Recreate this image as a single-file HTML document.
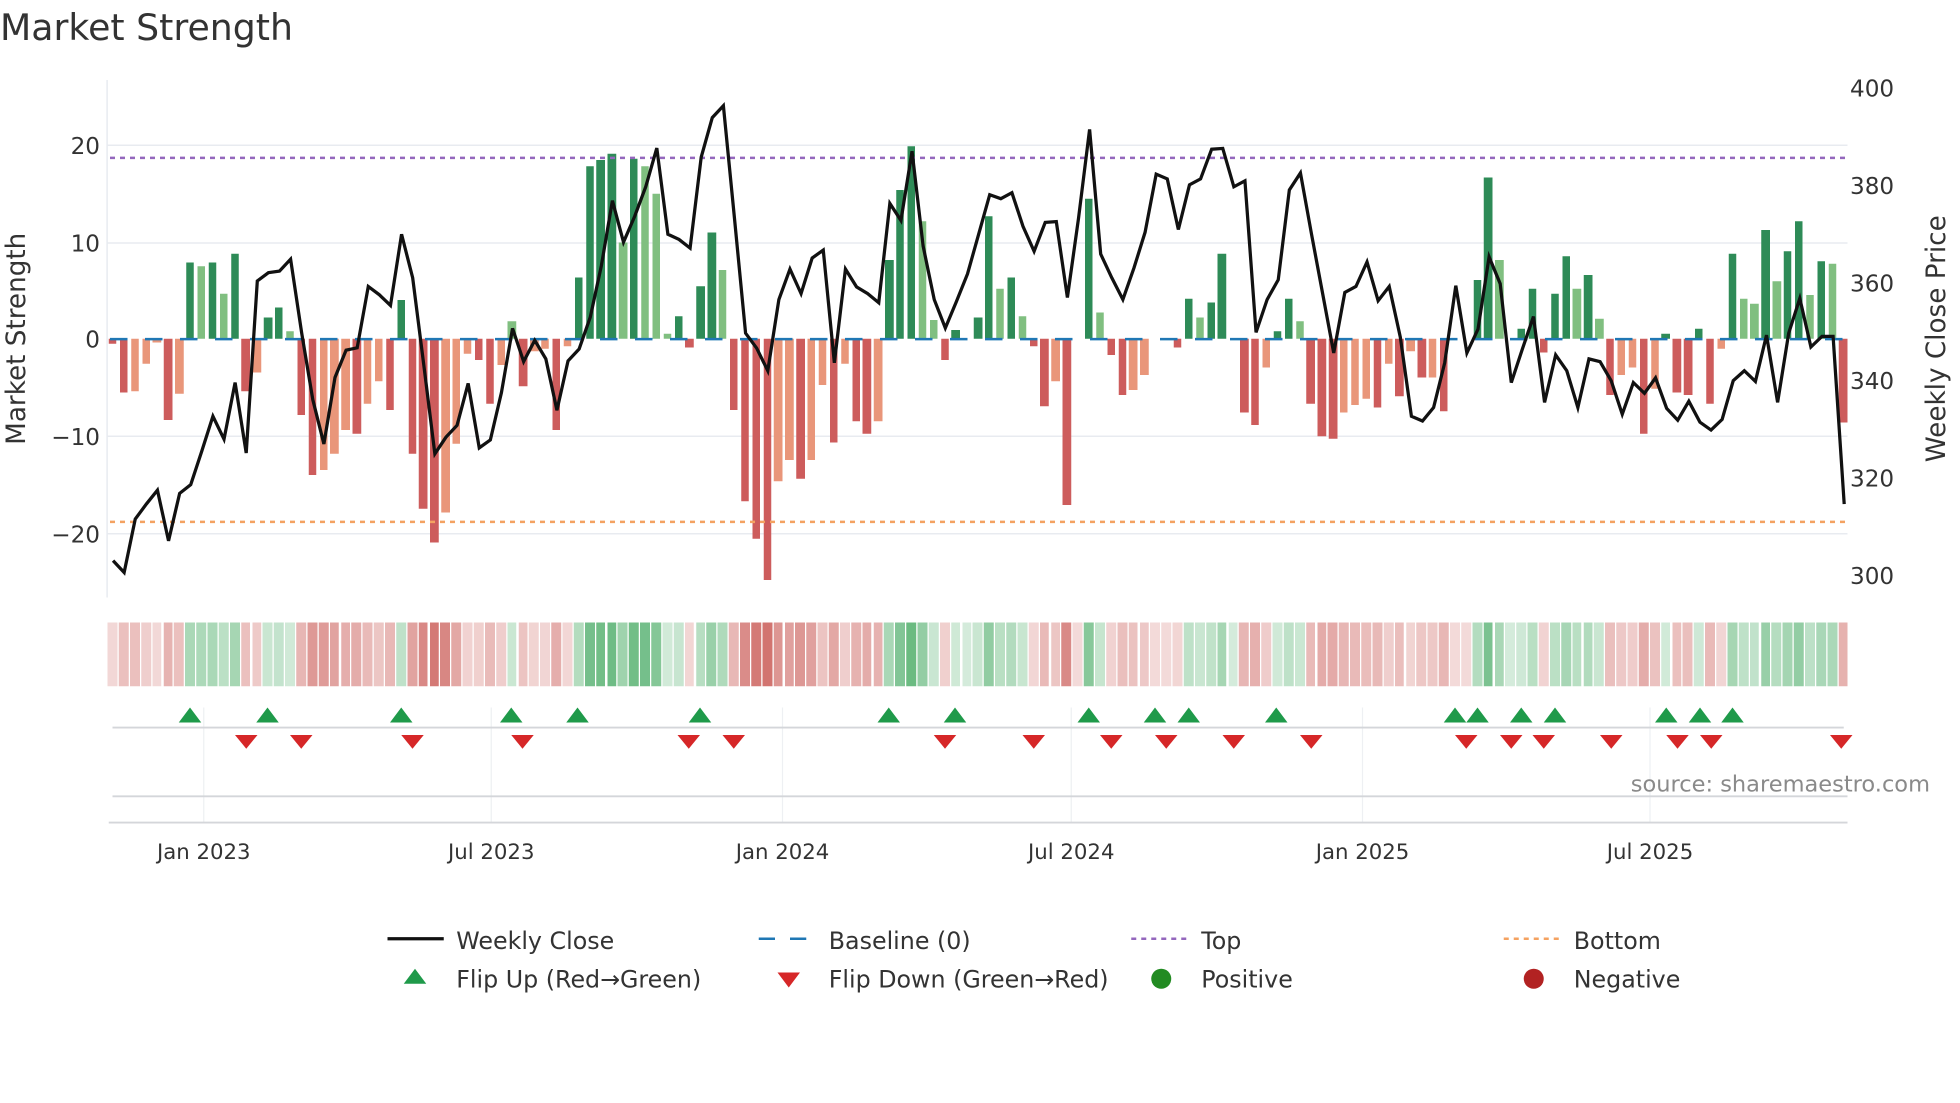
<!DOCTYPE html>
<html><head><meta charset="utf-8">
<style>
html,body{margin:0;padding:0;background:#fff;width:1960px;height:1102px;overflow:hidden;}
#root{position:absolute;left:0;top:0;width:1568px;height:882px;transform:scale(1.25);transform-origin:0 0;}
svg{display:block;font-family:"DejaVu Sans","Liberation Sans",sans-serif;position:absolute;left:0;top:0;}
#cols{position:absolute;left:85.66px;top:64px;display:flex;width:1394px;height:485px;}
#cols i{position:relative;display:block;width:8.878px;height:485px;flex:none;}
#cols i::before{content:"";position:absolute;left:1.24px;width:6.4px;height:calc(var(--m)*7.77px);}
#cols i::after{content:"";position:absolute;left:.54px;width:7.8px;top:434px;height:51px;opacity:calc(.22 + .6*min(var(--m)/22,1));}
#cols .a::before,#cols .b::before{bottom:277.7px;}
#cols .c::before,#cols .d::before{top:207.3px;}
#cols .a::before{background:#2e8b57}
#cols .b::before{background:#80bf80}
#cols .c::before{background:#cd5c5c}
#cols .d::before{background:#e9967a}
#cols .a::after,#cols .b::after{background:rgb(60,165,90)}
#cols .c::after,#cols .d::after{background:rgb(200,85,80)}
</style></head>
<body>
<div id="root">
<svg width="1568" height="882" viewBox="0 0 1568 882">
<g stroke="#e8ebf0" stroke-width="1.2">
<line x1="86" y1="116.2" x2="1478" y2="116.2"/>
<line x1="86" y1="194.4" x2="1478" y2="194.4"/>
<line x1="86" y1="349" x2="1478" y2="349"/>
<line x1="86" y1="427" x2="1478" y2="427"/>
<line x1="85.7" y1="64" x2="85.7" y2="478"/>
</g>
<g stroke="#eef0f3" stroke-width="1">
<line x1="163" y1="566" x2="163" y2="658"/><line x1="393" y1="566" x2="393" y2="658"/>
<line x1="626" y1="566" x2="626" y2="658"/><line x1="857" y1="566" x2="857" y2="658"/>
<line x1="1090" y1="566" x2="1090" y2="658"/><line x1="1320" y1="566" x2="1320" y2="658"/>
</g>
</svg>
<div id="cols">
<i class=c style=--m:.5></i><i class=c style=--m:5.5></i><i class=d style=--m:5.4></i><i class=d style=--m:2.5></i><i class=d style=--m:.4></i><i class=c style=--m:8.3></i><i class=d style=--m:5.6></i><i class=a style=--m:7.9></i><i class=b style=--m:7.5></i><i class=a style=--m:7.9></i>
<i class=b style=--m:4.7></i><i class=a style=--m:8.8></i><i class=c style=--m:5.4></i><i class=d style=--m:3.5></i><i class=a style=--m:2.2></i><i class=a style=--m:3.2></i><i class=b style=--m:.8></i><i class=c style=--m:7.8></i><i class=c style=--m:14></i><i class=d style=--m:13.5></i>
<i class=d style=--m:11.8></i><i class=d style=--m:9.3></i><i class=c style=--m:9.7></i><i class=d style=--m:6.7></i><i class=d style=--m:4.3></i><i class=c style=--m:7.3></i><i class=a style=--m:4></i><i class=c style=--m:11.8></i><i class=c style=--m:17.5></i><i class=c style=--m:20.9></i>
<i class=d style=--m:17.8></i><i class=d style=--m:10.8></i><i class=d style=--m:1.5></i><i class=c style=--m:2.2></i><i class=c style=--m:6.6></i><i class=d style=--m:2.7></i><i class=b style=--m:1.8></i><i class=c style=--m:4.8></i><i class=d style=--m:1.3></i><i class=d style=--m:1></i>
<i class=c style=--m:9.3></i><i class=d style=--m:.7></i><i class=a style=--m:6.3></i><i class=a style=--m:17.8></i><i class=a style=--m:18.5></i><i class=a style=--m:19.1></i><i class=b style=--m:10></i><i class=a style=--m:18.6></i><i class=b style=--m:17.8></i><i class=b style=--m:15></i>
<i class=b style=--m:.6></i><i class=a style=--m:2.4></i><i class=c style=--m:.8></i><i class=a style=--m:5.4></i><i class=a style=--m:11></i>
<i class=b style=--m:7.1></i><i class=c style=--m:7.3></i><i class=c style=--m:16.7></i><i class=c style=--m:20.5></i><i class=c style=--m:24.8></i><i class=d style=--m:14.6></i><i class=d style=--m:12.4></i><i class=c style=--m:14.4></i><i class=d style=--m:12.4></i><i class=d style=--m:4.7></i>
<i class=c style=--m:10.7></i><i class=d style=--m:2.5></i><i class=c style=--m:8.4></i><i class=c style=--m:9.7></i><i class=d style=--m:8.4></i><i class=a style=--m:8.2></i><i class=a style=--m:15.4></i><i class=a style=--m:19.8></i><i class=b style=--m:12.2></i><i class=b style=--m:2></i>
<i class=c style=--m:2.2></i><i class=a style=--m:1></i><i class=a style=--m:0></i><i class=a style=--m:2.2></i><i class=a style=--m:12.7></i><i class=b style=--m:5.2></i><i class=a style=--m:6.4></i><i class=b style=--m:2.3></i><i class=c style=--m:.7></i><i class=c style=--m:6.9></i>
<i class=d style=--m:4.3></i><i class=c style=--m:17.1></i><i class=c style=--m:0></i><i class=a style=--m:14.4></i><i class=b style=--m:2.7></i><i class=c style=--m:1.6></i><i class=c style=--m:5.8></i><i class=d style=--m:5.2></i><i class=d style=--m:3.7></i><i class=c style=--m:0></i>
<i class=c style=--m:0></i><i class=c style=--m:.9></i><i class=a style=--m:4.2></i><i class=b style=--m:2.2></i><i class=a style=--m:3.8></i><i class=a style=--m:8.8></i><i class=a style=--m:0></i><i class=c style=--m:7.6></i><i class=c style=--m:8.9></i><i class=d style=--m:2.9></i>
<i class=a style=--m:.8></i><i class=a style=--m:4.2></i><i class=b style=--m:1.8></i><i class=c style=--m:6.7></i>
<i class=c style=--m:10></i><i class=c style=--m:10.2></i><i class=d style=--m:7.6></i><i class=d style=--m:6.8></i><i class=d style=--m:6.1></i><i class=c style=--m:7></i><i class=d style=--m:2.5></i><i class=c style=--m:5.9></i><i class=d style=--m:1.3></i><i class=c style=--m:4></i>
<i class=d style=--m:3.9></i><i class=c style=--m:7.4></i><i class=c style=--m:0></i><i class=c style=--m:0></i><i class=a style=--m:6.1></i><i class=a style=--m:16.6></i><i class=b style=--m:8.2></i><i class=a style=--m:0></i><i class=a style=--m:1.1></i><i class=a style=--m:5.2></i>
<i class=c style=--m:1.4></i><i class=a style=--m:4.7></i><i class=a style=--m:8.5></i><i class=b style=--m:5.2></i><i class=a style=--m:6.6></i><i class=b style=--m:2.1></i><i class=c style=--m:5.8></i><i class=d style=--m:3.7></i><i class=d style=--m:2.9></i><i class=c style=--m:9.7></i>
<i class=d style=--m:5.1></i><i class=a style=--m:.6></i><i class=c style=--m:5.5></i><i class=c style=--m:5.8></i><i class=a style=--m:1.1></i><i class=c style=--m:6.7></i><i class=d style=--m:1></i><i class=a style=--m:8.8></i><i class=b style=--m:4.1></i><i class=b style=--m:3.6></i>
<i class=a style=--m:11.3></i><i class=b style=--m:5.9></i><i class=a style=--m:9.1></i><i class=a style=--m:12.2></i><i class=b style=--m:4.5></i><i class=a style=--m:8></i><i class=b style=--m:7.8></i><i class=c style=--m:8.6></i>
</div>
<svg width="1568" height="882" viewBox="0 0 1568 882">
<text x="0" y="32" font-size="29" fill="#333">Market Strength</text>
<line x1="88" y1="271.3" x2="1478" y2="271.3" stroke="#1f77b4" stroke-width="2" stroke-dasharray="14 14"/>
<line x1="88" y1="126.3" x2="1478" y2="126.3" stroke="#9467bd" stroke-width="2" stroke-dasharray="4 4"/>
<line x1="88" y1="417.5" x2="1478" y2="417.5" stroke="#f4a261" stroke-width="2" stroke-dasharray="4 4"/>
<g font-size="18.5" fill="#333" text-anchor="end">
<text x="80" y="123">20</text><text x="80" y="201">10</text><text x="80" y="278">0</text>
<text x="80" y="356">−10</text><text x="80" y="434">−20</text>
</g>
<g font-size="18.5" fill="#333">
<text x="1480" y="77">400</text><text x="1480" y="155">380</text><text x="1480" y="233">360</text>
<text x="1480" y="311">340</text><text x="1480" y="389">320</text><text x="1480" y="467">300</text>
</g>
<text transform="translate(20,271) rotate(-90)" font-size="21" fill="#333" text-anchor="middle">Market Strength</text>
<text transform="translate(1556,271) rotate(-90)" font-size="21" fill="#333" text-anchor="middle">Weekly Close Price</text>
<line x1="90" y1="582" x2="1475" y2="582" stroke="#d4d6da" stroke-width="1.5"/>
<line x1="90" y1="637" x2="1478" y2="637" stroke="#d4d6da" stroke-width="1.5"/>
<line x1="87" y1="658" x2="1478" y2="658" stroke="#d4d6da" stroke-width="1.5"/>
<g fill="#1f9a4a">
<polygon points="143,578 161,578 152,566"/><polygon points="205,578 223,578 214,566"/><polygon points="312,578 330,578 321,566"/><polygon points="400,578 418,578 409,566"/><polygon points="453,578 471,578 462,566"/><polygon points="551,578 569,578 560,566"/><polygon points="702,578 720,578 711,566"/><polygon points="755,578 773,578 764,566"/><polygon points="862,578 880,578 871,566"/><polygon points="915,578 933,578 924,566"/><polygon points="942,578 960,578 951,566"/><polygon points="1012,578 1030,578 1021,566"/><polygon points="1155,578 1173,578 1164,566"/><polygon points="1173,578 1191,578 1182,566"/><polygon points="1208,578 1226,578 1217,566"/><polygon points="1235,578 1253,578 1244,566"/><polygon points="1324,578 1342,578 1333,566"/><polygon points="1351,578 1369,578 1360,566"/><polygon points="1377,578 1395,578 1386,566"/>
</g>
<g fill="#d62728">
<polygon points="188,588 206,588 197,599"/><polygon points="232,588 250,588 241,599"/><polygon points="321,588 339,588 330,599"/><polygon points="409,588 427,588 418,599"/><polygon points="542,588 560,588 551,599"/><polygon points="578,588 596,588 587,599"/><polygon points="747,588 765,588 756,599"/><polygon points="818,588 836,588 827,599"/><polygon points="880,588 898,588 889,599"/><polygon points="924,588 942,588 933,599"/><polygon points="978,588 996,588 987,599"/><polygon points="1040,588 1058,588 1049,599"/><polygon points="1164,588 1182,588 1173,599"/><polygon points="1200,588 1218,588 1209,599"/><polygon points="1226,588 1244,588 1235,599"/><polygon points="1280,588 1298,588 1289,599"/><polygon points="1333,588 1351,588 1342,599"/><polygon points="1360,588 1378,588 1369,599"/><polygon points="1464,588 1482,588 1473,599"/>
</g>
<text x="1544" y="633" font-size="18" fill="#8a8a8a" text-anchor="end">source: sharemaestro.com</text>
<g font-size="17" fill="#333" text-anchor="middle">
<text x="163" y="687">Jan 2023</text><text x="393" y="687">Jul 2023</text><text x="626" y="687">Jan 2024</text>
<text x="857" y="687">Jul 2024</text><text x="1090" y="687">Jan 2025</text><text x="1320" y="687">Jul 2025</text>
</g>
<g font-size="19" fill="#333">
<line x1="310" y1="751" x2="355" y2="751" stroke="#111" stroke-width="2.6"/>
<text x="365" y="759">Weekly Close</text>
<line x1="607" y1="751" x2="652" y2="751" stroke="#1f77b4" stroke-width="2" stroke-dasharray="13 12"/>
<text x="663" y="759">Baseline (0)</text>
<line x1="905" y1="751" x2="950" y2="751" stroke="#9467bd" stroke-width="2" stroke-dasharray="4 4"/>
<text x="961" y="759">Top</text>
<line x1="1203" y1="751" x2="1248" y2="751" stroke="#f4a261" stroke-width="2" stroke-dasharray="4 4"/>
<text x="1259" y="759">Bottom</text>
<polygon points="323,787 341,787 332,775" fill="#1f9a4a"/>
<text x="365" y="790">Flip Up (Red→Green)</text>
<polygon points="622,778 640,778 631,790" fill="#d62728"/>
<text x="663" y="790">Flip Down (Green→Red)</text>
<circle cx="929" cy="783" r="8" fill="#228b22"/>
<text x="961" y="790">Positive</text>
<circle cx="1227" cy="783" r="8" fill="#b22222"/>
<text x="1259" y="790">Negative</text>
</g>
</svg>
<svg style="left:85.66px;top:64px" width="1393.8" height="500" viewBox="-0.5 0 157 1580" preserveAspectRatio="none">
<polyline fill="none" stroke="#111" stroke-width="2.6" vector-effect="non-scaling-stroke" points="0,1215 1,1245 2,1110 3,1072 4,1037 5,1165 6,1045 7,1023 8,938 9,850 10,908 11,765 12,943 13,508 14,487 15,483 16,453 17,640 18,808 19,920 20,752 21,683 22,677 23,522 24,543 25,570 26,390 27,500 28,720 29,945 30,903 31,873 32,767 33,930 34,910 35,790 36,628 37,712 38,658 39,705 40,835 41,710 42,680 43,600 44,470 45,305 46,410 47,345 48,270 49,172 50,390 51,403 52,425 53,195 54,95 55,65 56,350 57,640 58,678 59,735 60,555 61,478 62,540 63,450 64,430 65,715 66,478 67,523 68,540 69,563 70,312 71,355 72,180 73,420 74,555 75,627 76,560 77,490 78,390 79,290 80,300 81,285 82,370 83,433 84,360 85,358 86,550 87,350 88,125 89,440 90,500 91,555 92,475 93,385 94,238 95,250 96,378 97,265 98,250 99,175 100,173 101,270 102,255 103,638 104,555 105,505 106,278 107,235 108,390 109,540 110,690 111,537 112,522 113,460 114,558 115,522 116,650 117,850 118,862 119,828 120,715 121,520 122,690 123,630 124,447 125,515 126,765 127,680 128,598 129,815 130,695 131,735 132,828 133,705 134,712 135,760 136,845 137,765 138,792 139,753 140,830 141,860 142,812 143,865 144,885 145,858 146,760 147,735 148,762 149,645 150,815 151,640 152,552 153,675 154,648 155,648 156,1072"/>
</svg>
</div>
</body></html>
